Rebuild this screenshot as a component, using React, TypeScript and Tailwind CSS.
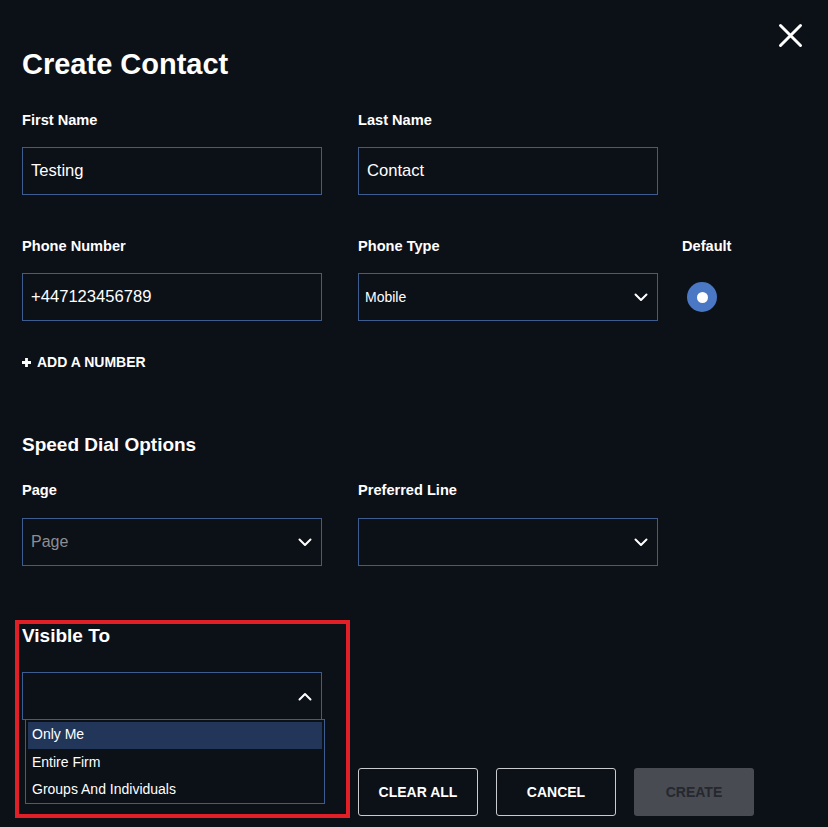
import React from "react";

const Chevron = ({ up = false }: { up?: boolean }) => (
  <svg width="14" height="9" viewBox="0 0 14 9" fill="none" className="shrink-0">
    <path
      d={up ? "M1.5 7.5 L7 2 L12.5 7.5" : "M1.5 1.5 L7 7 L12.5 1.5"}
      stroke="#ffffff"
      strokeWidth="2"
      strokeLinecap="round"
      strokeLinejoin="round"
    />
  </svg>
);

const Label = ({ children }: { children: React.ReactNode }) => (
  <div className="h-[20px] leading-[20px] text-[14.6px] font-bold text-white">{children}</div>
);

const TextInput = ({ value }: { value: string }) => (
  <div className="mt-[17px] h-[48px] w-[300px] border border-[#3d5d91] flex items-center pl-[8px] text-[16.6px] text-white">
    {value}
  </div>
);

const SelectBox = ({ placeholder, up }: { placeholder?: string; up?: boolean }) => (
  <div className="h-[48px] w-[300px] border border-[#3d5d91] flex items-center justify-between pl-[8px] pr-[9px]">
    <span className="text-[16px] text-[#8b8e94]">{placeholder ?? ""}</span>
    <Chevron up={up} />
  </div>
);

export default function App() {
  return (
    <div className="relative min-h-screen bg-[#0c1017] text-white font-['Liberation_Sans',Arial,sans-serif]">
      {/* close */}
      <button className="absolute left-[778px] top-[23px] w-[25px] h-[25px] flex items-center justify-center">
        <svg width="25" height="25" viewBox="0 0 25 25" fill="none">
          <path d="M2.5 2.5 L22.5 22.5 M22.5 2.5 L2.5 22.5" stroke="#ffffff" strokeWidth="3" strokeLinecap="round" />
        </svg>
      </button>

      <div className="pl-[22px] pt-[47px] pb-[11px]">
        <h1 className="h-[34px] leading-[34px] text-[29px] font-bold">Create Contact</h1>

        {/* name row */}
        <div className="mt-[29px] flex gap-[36px]">
          <div>
            <Label>First Name</Label>
            <TextInput value="Testing" />
          </div>
          <div>
            <Label>Last Name</Label>
            <TextInput value="Contact" />
          </div>
        </div>

        {/* phone row */}
        <div className="mt-[41px] flex">
          <div>
            <Label>Phone Number</Label>
            <TextInput value="+447123456789" />
          </div>
          <div className="ml-[36px]">
            <Label>Phone Type</Label>
            <div className="mt-[17px]">
              <div className="h-[48px] w-[300px] border border-[#3d5d91] flex items-center justify-between pl-[6px] pr-[9px]">
                <span className="text-[14px] text-white">Mobile</span>
                <Chevron />
              </div>
            </div>
          </div>
          <div className="ml-[24px]">
            <Label>Default</Label>
            <div className="mt-[17px] h-[48px] flex items-center pl-[5px]">
              <div className="w-[30px] h-[30px] rounded-full bg-[#4a78c4] flex items-center justify-center">
                <div className="w-[11px] h-[11px] rounded-full bg-white" />
              </div>
            </div>
          </div>
        </div>

        {/* add number */}
        <button className="mt-[31px] h-[20px] flex items-center gap-[6px] text-[14px] font-bold">
          <svg width="9" height="9" viewBox="0 0 9 9">
            <path d="M4.5 0 V9 M0 4.5 H9" stroke="#ffffff" strokeWidth="2.8" />
          </svg>
          ADD A NUMBER
        </button>

        {/* speed dial */}
        <h2 className="mt-[61px] h-[24px] leading-[24px] text-[19px] font-bold">Speed Dial Options</h2>
        <div className="mt-[23px] flex gap-[36px]">
          <div>
            <Label>Page</Label>
            <div className="mt-[18px]">
              <SelectBox placeholder="Page" />
            </div>
          </div>
          <div>
            <Label>Preferred Line</Label>
            <div className="mt-[18px]">
              <SelectBox />
            </div>
          </div>
        </div>

        {/* visibility + actions */}
        <div className="relative mt-[58px]">
          <div className="pointer-events-none absolute left-[-7px] top-[-4px] w-[335px] h-[198px] border-4 border-[#e01f27] z-10" />

          <h2 className="h-[24px] leading-[24px] text-[19px] font-bold">Visible To</h2>
          <div className="relative mt-[24px] w-[300px]">
            <SelectBox up />
            <ul className="absolute left-[3px] top-[47px] w-[300px] border border-[#3d5d91] bg-[#0c1017] pt-[2px] px-[2px] text-[14px] text-white">
              <li className="h-[27px] leading-[25px] pl-[4px] bg-[#22365a]">Only Me</li>
              <li className="h-[27px] leading-[27px] pl-[4px]">Entire Firm</li>
              <li className="h-[27px] leading-[27px] pl-[4px]">Groups And Individuals</li>
            </ul>
          </div>

          <div className="mt-[48px] flex gap-[18px] pl-[336px]">
            <button className="w-[120px] h-[48px] rounded-[3px] border border-[#c9cbcf] text-[14px] font-bold text-white">
              CLEAR ALL
            </button>
            <button className="w-[120px] h-[48px] rounded-[3px] border border-[#c9cbcf] text-[14px] font-bold text-white">
              CANCEL
            </button>
            <button className="w-[120px] h-[48px] rounded-[3px] bg-[#484b51] text-[14px] font-bold text-[#25282e]">
              CREATE
            </button>
          </div>
        </div>
      </div>
    </div>
  );
}
